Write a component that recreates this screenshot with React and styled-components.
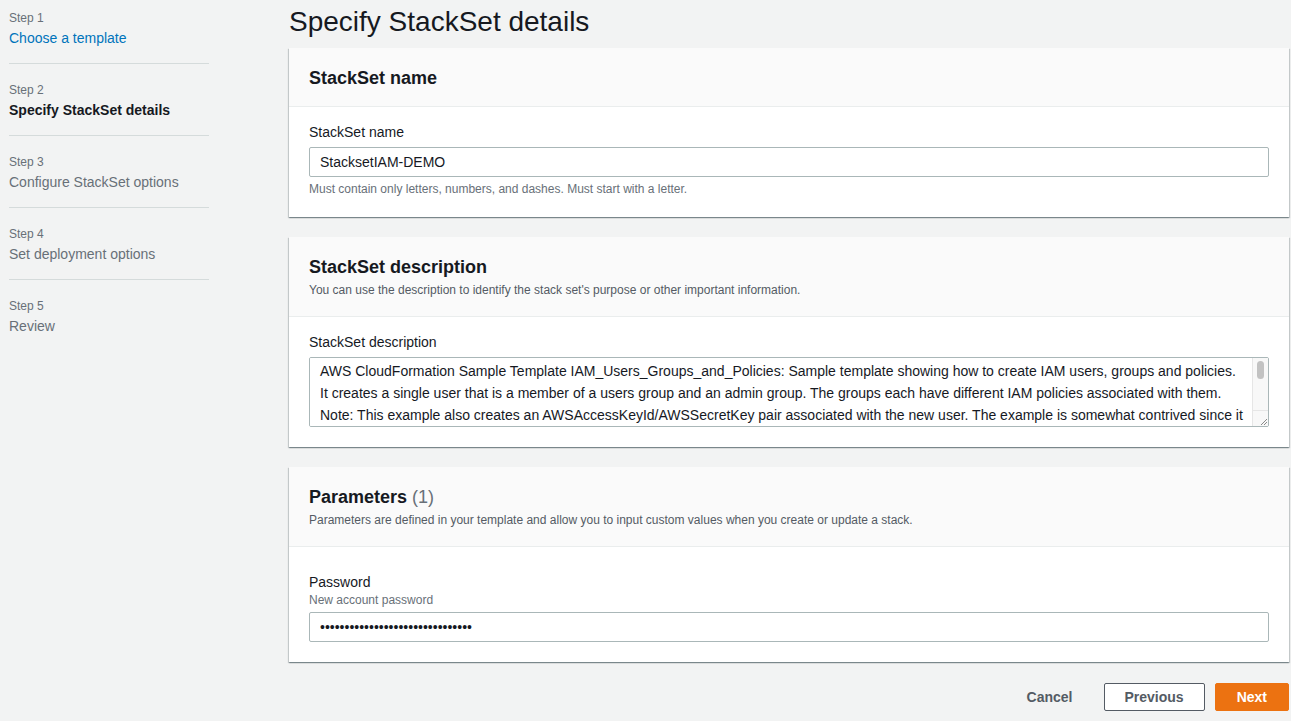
import React from "react";
import styled, { createGlobalStyle } from "styled-components";

const GlobalStyle = createGlobalStyle`
  body {
    margin: 0;
    background: #f2f3f3;
    font-family: "Liberation Sans", Arial, sans-serif;
    color: #16191f;
  }
`;

const Layout = styled.div`
  display: flex;
  align-items: flex-start;
  width: 1291px;
  min-height: 721px;
`;

const Sidebar = styled.ol`
  list-style: none;
  margin: 0;
  padding: 10px 0 0 9px;
  width: 200px;
  flex-shrink: 0;
  margin-right: 80px;
`;

const Step = styled.li`
  padding-bottom: 14px;
  margin-bottom: 18px;
  border-bottom: 1px solid ${(p) => (p.$last ? "transparent" : "#d5dbdb")};
`;

const StepLabel = styled.div`
  font-size: 12px;
  line-height: 16px;
  color: #687078;
`;

const StepTitle = styled.div`
  margin-top: 1px;
  font-size: 14px;
  line-height: 22px;
  font-weight: ${(p) => (p.$state === "current" ? 700 : 400)};
  color: ${(p) =>
    p.$state === "link" ? "#0073bb" : p.$state === "current" ? "#16191f" : "#687078"};
`;

const Main = styled.main`
  width: 1000px;
  display: flex;
  flex-direction: column;
`;

const PageTitle = styled.h1`
  margin: 4px 0 8px;
  font-size: 28px;
  line-height: 36px;
  font-weight: 400;
  color: #16191f;
`;

const Panel = styled.section`
  background: #fff;
  margin-bottom: 20px;
  box-shadow: 0 1px 1px 0 rgba(0, 28, 36, 0.3),
    1px 1px 1px 0 rgba(0, 28, 36, 0.15),
    -1px 1px 1px 0 rgba(0, 28, 36, 0.15);
`;

const PanelHeader = styled.header`
  background: #fafafa;
  border-bottom: 1px solid #eaeded;
  padding: 19px 20px ${(p) => (p.$withSub ? "18px" : "17px")};
`;

const PanelTitle = styled.h2`
  margin: 0;
  font-size: 18px;
  line-height: 22px;
  font-weight: 700;
  color: #16191f;
`;

const Counter = styled.span`
  font-weight: 400;
  color: #687078;
`;

const PanelSub = styled.p`
  margin: 4px 0 0;
  font-size: 12px;
  line-height: 16px;
  color: #545b64;
`;

const PanelBody = styled.div`
  padding: ${(p) => (p.$spacious ? "25px" : "14px")} 20px 20px;
`;

const Label = styled.label`
  display: block;
  font-size: 14px;
  line-height: ${(p) => (p.$tight ? "20px" : "22px")};
  color: #16191f;
`;

const Description = styled.div`
  font-size: 12px;
  line-height: 16px;
  color: #687078;
`;

const Control = styled.div`
  position: relative;
  margin-top: 4px;
`;

const TextInput = styled.input`
  box-sizing: border-box;
  display: block;
  width: 100%;
  height: 30px;
  padding: 4px 10px;
  border: 1px solid #aab7b8;
  border-radius: 2px;
  background: #fff;
  font-family: "Liberation Sans", Arial, sans-serif;
  font-size: 14px;
  color: #16191f;
  outline: none;
`;

const TextArea = styled.textarea`
  box-sizing: border-box;
  display: block;
  width: 100%;
  height: 70px;
  padding: 2px 16px 2px 10px;
  border: 1px solid #aab7b8;
  border-radius: 2px;
  font-family: "Liberation Sans", Arial, sans-serif;
  font-size: 14px;
  line-height: 22px;
  color: #16191f;
  resize: none;
  outline: none;
  scrollbar-width: none;

  &::-webkit-scrollbar {
    display: none;
  }
`;

/* mac-style scrollbar drawn over the textarea */
const ScrollTrack = styled.div`
  position: absolute;
  top: 1px;
  right: 1px;
  bottom: 1px;
  width: 15px;
  display: flex;
  flex-direction: column;
  background: #f8f8f8;
  border-left: 1px solid #e6e6e6;
  pointer-events: none;
`;

const ScrollThumb = styled.div`
  width: 7px;
  height: 18px;
  margin: 3px 0 0 4px;
  border-radius: 4px;
  background: #c2c2c2;
`;

const Resizer = styled.div`
  margin-top: auto;
  height: 15px;
  border-top: 1px solid #e6e6e6;
  display: flex;
  align-items: flex-end;
  justify-content: flex-end;
`;

const Hint = styled.div`
  margin-top: 4px;
  font-size: 12px;
  line-height: 16px;
  color: #687078;
`;

const Actions = styled.div`
  display: flex;
  justify-content: flex-end;
  gap: 10px;
  margin-top: 1px;
`;

const Button = styled.button`
  height: 28px;
  padding: 0 ${(p) => (p.$variant === "primary" ? "21px" : "20px")};
  border-radius: 2px;
  font-family: "Liberation Sans", Arial, sans-serif;
  font-size: 14px;
  font-weight: 700;
  cursor: pointer;
  border: 1px solid
    ${(p) =>
      p.$variant === "primary" ? "#ec7211" : p.$variant === "link" ? "transparent" : "#545b64"};
  background: ${(p) =>
    p.$variant === "primary" ? "#ec7211" : p.$variant === "link" ? "transparent" : "#fff"};
  color: ${(p) => (p.$variant === "primary" ? "#fff" : "#545b64")};
`;

const steps = [
  { n: 1, title: "Choose a template", state: "link" },
  { n: 2, title: "Specify StackSet details", state: "current" },
  { n: 3, title: "Configure StackSet options", state: "todo" },
  { n: 4, title: "Set deployment options", state: "todo" },
  { n: 5, title: "Review", state: "todo" },
];

const description =
  "AWS CloudFormation Sample Template IAM_Users_Groups_and_Policies: Sample template showing how to create IAM users, groups and policies.\n" +
  "It creates a single user that is a member of a users group and an admin group. The groups each have different IAM policies associated with them.\n" +
  "Note: This example also creates an AWSAccessKeyId/AWSSecretKey pair associated with the new user. The example is somewhat contrived since it\n" +
  "creates all of the users and groups, typically you would be creating policies, users and/or groups that contain references to existing users\n" +
  "or groups in your environment. Note that you will need to specify the CAPABILITY_IAM flag when you create the stack to allow this template\n" +
  "to execute. You can do this through the AWS management console by clicking on the check box acknowledging that you understand this\n" +
  "template creates IAM resources or by specifying the CAPABILITY_IAM flag to the cfn-create-stack command line tool.";

const App = () => {
  return (
    <>
      <GlobalStyle />
      <Layout>
        <Sidebar>
          {steps.map((s, i) => (
            <Step key={s.n} $last={i === steps.length - 1}>
              <StepLabel>Step {s.n}</StepLabel>
              <StepTitle $state={s.state}>{s.title}</StepTitle>
            </Step>
          ))}
        </Sidebar>

        <Main>
          <PageTitle>Specify StackSet details</PageTitle>

          <Panel>
            <PanelHeader>
              <PanelTitle>StackSet name</PanelTitle>
            </PanelHeader>
            <PanelBody>
              <Label>StackSet name</Label>
              <Control>
                <TextInput defaultValue="StacksetIAM-DEMO" />
              </Control>
              <Hint>Must contain only letters, numbers, and dashes. Must start with a letter.</Hint>
            </PanelBody>
          </Panel>

          <Panel>
            <PanelHeader $withSub>
              <PanelTitle>StackSet description</PanelTitle>
              <PanelSub>
                You can use the description to identify the stack set's purpose or other important information.
              </PanelSub>
            </PanelHeader>
            <PanelBody>
              <Label>StackSet description</Label>
              <Control>
                <TextArea defaultValue={description} />
                <ScrollTrack>
                  <ScrollThumb />
                  <Resizer>
                    <svg width="9" height="9" viewBox="0 0 9 9">
                      <path d="M8 2 L2 8 M8 5 L5 8" stroke="#8a8a8a" strokeWidth="1" />
                    </svg>
                  </Resizer>
                </ScrollTrack>
              </Control>
            </PanelBody>
          </Panel>

          <Panel>
            <PanelHeader $withSub>
              <PanelTitle>
                Parameters <Counter>(1)</Counter>
              </PanelTitle>
              <PanelSub>
                Parameters are defined in your template and allow you to input custom values when you create or update a stack.
              </PanelSub>
            </PanelHeader>
            <PanelBody $spacious>
              <Label $tight>Password</Label>
              <Description>New account password</Description>
              <Control>
                <TextInput type="password" defaultValue="StacksetIAMDemoPassword12345678" />
              </Control>
            </PanelBody>
          </Panel>

          <Actions>
            <Button $variant="link">Cancel</Button>
            <Button>Previous</Button>
            <Button $variant="primary">Next</Button>
          </Actions>
        </Main>
      </Layout>
    </>
  );
};

export default App;
